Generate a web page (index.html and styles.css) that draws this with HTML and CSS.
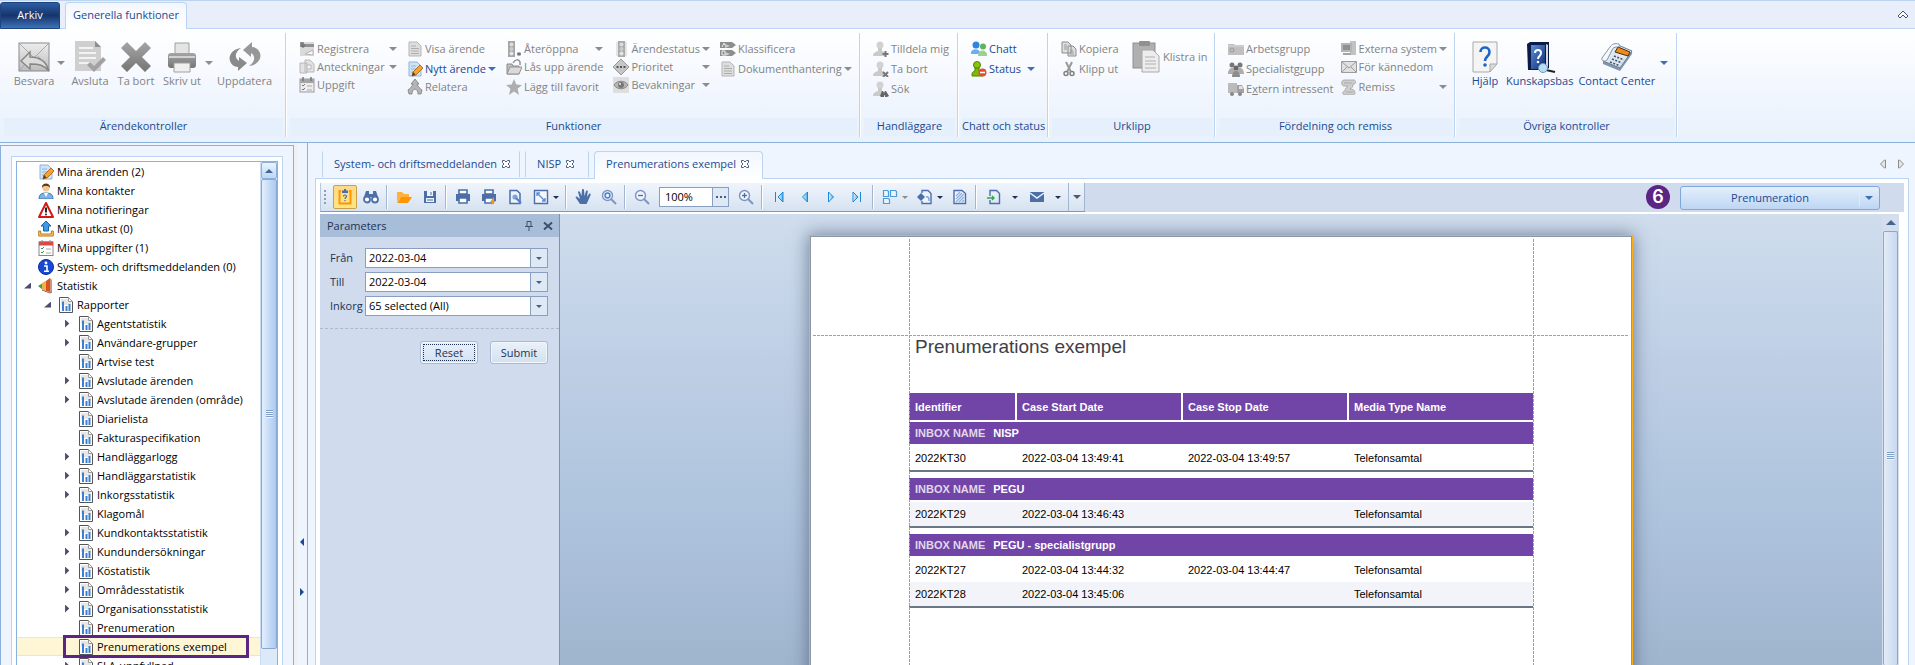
FILE: index.html
```html
<!DOCTYPE html>
<html lang="sv">
<head>
  <meta charset="UTF-8" />
  <title>Prenumerations exempel</title>
  <meta name="viewport" content="width=device-width, initial-scale=1" />
  <link rel="stylesheet" href="styles.css">
</head>
<body>
  <!-- ===========================
       Icon sprite
       =========================== -->
  <svg class="sprite" aria-hidden="true">
    <defs>
      <linearGradient id="g-grey" x1="0" y1="0" x2="0" y2="1"><stop offset="0" stop-color="#ededed"/><stop offset="1" stop-color="#bdbdbd"/></linearGradient>
      <linearGradient id="g-dark" x1="0" y1="0" x2="0" y2="1"><stop offset="0" stop-color="#a5a5a5"/><stop offset="1" stop-color="#757575"/></linearGradient>
      <linearGradient id="g-blue" x1="0" y1="0" x2="1" y2="1"><stop offset="0" stop-color="#5b8fd8"/><stop offset="1" stop-color="#0c2c74"/></linearGradient>
      <linearGradient id="g-nav" x1="0" y1="0" x2="1" y2="0"><stop offset="0" stop-color="#e8f7ff"/><stop offset="1" stop-color="#4fb3ea"/></linearGradient>

      <symbol id="i-reply" viewBox="0 0 32 32"><rect x="1" y="2" width="30" height="28" fill="url(#g-grey)" stroke="#8a8a8a"/><path d="M2 3l14 14L30 3M2 29l11-13M30 29L20 15" fill="none" stroke="#a8a8a8"/><path d="M3 20l9-9v5c9 0 16 3 19 14-5-6-10-7-19-7v5z" fill="#dcdcdc" stroke="#858585" stroke-width="1.4"/></symbol>
      <symbol id="i-finish" viewBox="0 0 32 32"><path d="M1 0h20l6 6v24H1z" fill="#cfcfcf"/><path d="M21 0v6h6z" fill="#8e8e8e"/><path d="M5 7h14M5 12h17M5 17h17M5 22h12" stroke="#f3f3f3" stroke-width="2"/><path d="M13 24l3-3 4 4 9-9 3 3-12 12z" fill="#a2a2a2"/></symbol>
      <symbol id="i-delete" viewBox="0 0 32 32"><path d="M7 1l9 9 9-9 6 6-9 9 9 9-6 6-9-9-9 9-6-6 9-9-9-9z" fill="url(#g-dark)"/></symbol>
      <symbol id="i-print" viewBox="0 0 32 32"><path d="M9 2h14v12H9z" fill="#e4e4e4" stroke="#a0a0a0"/><rect x="2" y="12" width="28" height="15" rx="3" fill="url(#g-dark)"/><path d="M3 16h26" stroke="#d2d2d2" stroke-width="2"/><path d="M8 22h16v9H8z" fill="#efefef" stroke="#a0a0a0"/></symbol>
      <symbol id="i-refresh" viewBox="0 0 32 32"><path d="M12 7C4 8-1 14 1 20c1 3 4 6 8 6v4l9-8-8-6v4c-5-3-4-9 2-13z" fill="#8a8a8a"/><path d="M20 25c8-1 13-7 11-13-1-3-4-6-8-6V1l-9 8 8 7v-4c5 3 4 9-2 13z" fill="#979797"/></symbol>
      <symbol id="i-doc" viewBox="0 0 16 16"><path d="M2 1h8l4 4v10H2z" fill="#dedede" stroke="#b5b5b5"/><path d="M4 5h5M4 7.500h8M4 10h8M4 12.500h8" stroke="#adadad"/></symbol>
      <symbol id="i-register" viewBox="0 0 16 16"><rect x="1" y="1" width="14" height="14" fill="#dadada"/><path d="M1 1h4v2h10v3H1z" fill="#909090"/><path d="M3 2v4h2V3" fill="none" stroke="#666"/><path d="M6 13l8-4v5z" fill="#f7f7f7" stroke="#b5b5b5"/></symbol>
      <symbol id="i-notes" viewBox="0 0 16 16"><path d="M1 4h7v10H1zM6 1h5l4 4v8H6z" fill="#e2e2e2" stroke="#b8b8b8"/><path d="M8 6h4v4H8z" fill="#f4f4f4" stroke="#b8b8b8"/></symbol>
      <symbol id="i-task" viewBox="0 0 16 16"><rect x="1" y="2" width="14" height="13" fill="#ededed" stroke="#9b9b9b"/><path d="M1 2h14v4H1z" fill="#a5a5a5"/><path d="M4 0v4M12 0v4" stroke="#777" stroke-width="1.500"/><path d="M3 8l1 1 2-2M3 12l1 1 2-2" fill="none" stroke="#777"/><path d="M8 9h5M8 13h5" stroke="#aaa"/></symbol>
      <symbol id="i-edit" viewBox="0 0 16 16"><path d="M2 1h8l4 4v10H2z" fill="#cfe3f6" stroke="#8fb4da"/><path d="M4 5h5M4 8h7M4 11h4" stroke="#8fb4da"/><path d="M5 15l1-4 7-7 3 3-7 7z" fill="#f5a32a" stroke="#a35d12" stroke-width=".8"/><path d="M5 15l1-4 2.500 2.500z" fill="#5a3a1a"/></symbol>
      <symbol id="i-relate" viewBox="0 0 16 16"><path d="M8 0l4 5h-2c1 3 3 4 5 6l-1 4h-3c0-3-1-4-3-5-2 1-3 2-3 5H2l-1-4c2-2 4-3 5-6H4z" fill="#b4b4b4" stroke="#7f7f7f" stroke-width=".8"/></symbol>
      <symbol id="i-light" viewBox="0 0 16 16"><path d="M5 0h7v16H5z" fill="#aaa"/><path d="M4 1v14M13 1v14" stroke="#cdcdcd"/><circle cx="8.500" cy="3.500" r="2" fill="#dcdcdc"/><circle cx="8.500" cy="8" r="2" fill="#cacaca"/><circle cx="8.500" cy="12.500" r="2" fill="#e4e4e4"/></symbol>
      <symbol id="i-reopen" viewBox="0 0 16 16"><path d="M2 0h7v16H2z" fill="#a5a5a5"/><circle cx="5.500" cy="3.500" r="2" fill="#dcdcdc"/><circle cx="5.500" cy="8" r="2" fill="#cacaca"/><circle cx="5.500" cy="12.500" r="2" fill="#e4e4e4"/><path d="M13 11v4M11 12l4 2M15 12l-4 2" stroke="#666"/></symbol>
      <symbol id="i-unlock" viewBox="0 0 16 16"><path d="M1 5h5l1 2h6v8H1z" fill="#bebebe" stroke="#8c8c8c"/><path d="M1 15l3-7h12l-3 7z" fill="#dadada" stroke="#939393"/><path d="M7 4c2-4 6-4 7-1v3" fill="none" stroke="#939393" stroke-width="1.500"/></symbol>
      <symbol id="i-star" viewBox="0 0 16 16"><path d="M8 0l2.300 5.600 5.700.4-4.400 3.700L13 16l-5-3.400L3 16l1.400-6.300L0 6l5.700-.4z" fill="#aeaeae"/></symbol>
      <symbol id="i-prio" viewBox="0 0 16 16"><path d="M8 0l8 8-8 8-8-8z" fill="#c6c6c6" stroke="#9a9a9a"/><path d="M3.500 8h9" stroke="#555" stroke-width="2" stroke-dasharray="2 1.500"/></symbol>
      <symbol id="i-eye" viewBox="0 0 16 16"><path d="M0 0h16v16H0z" fill="#dedede"/><path d="M1 8c3-5 11-5 14 0-3 5-11 5-14 0z" fill="#b5b5b5" stroke="#8a8a8a"/><circle cx="8" cy="8" r="3" fill="#777"/><circle cx="7" cy="7" r="1" fill="#eee"/></symbol>
      <symbol id="i-class" viewBox="0 0 16 16"><path d="M0 1h12l4 3-4 3H0zM0 9h12l4 3-4 3H0z" fill="#8d8d8d"/><path d="M2 6l2-4 2 4M2 14V10h3v4z" fill="none" stroke="#eee"/><path d="M5 3l5 2-5 2zM5 11l5 2-5 2z" fill="#ccc"/></symbol>
      <symbol id="i-user" viewBox="0 0 16 16"><circle cx="7" cy="4" r="3.500" fill="#d2d2d2"/><path d="M5 7h4v3c3 1 4 2 4 5H0c0-3 2-4 5-5z" fill="#cacaca"/></symbol>
      <symbol id="i-useradd" viewBox="0 0 16 16"><use href="#i-user"/><path d="M12.500 10v6M9.500 13h6" stroke="#777" stroke-width="2"/></symbol>
      <symbol id="i-userdel" viewBox="0 0 16 16"><use href="#i-user"/><path d="M10 11l5 5M15 11l-5 5" stroke="#777" stroke-width="2"/></symbol>
      <symbol id="i-userfind" viewBox="0 0 16 16"><use href="#i-user"/><path d="M7 15l2-5h1l1 2 1-2h1l3 5-2 1h-2v-2h-1v2H8z" fill="#666"/></symbol>
      <symbol id="i-chat" viewBox="0 0 16 16"><circle cx="5" cy="4" r="3.500" fill="#2f86e0"/><path d="M0 12c0-5 9-5 9 0v1H0z" fill="#69aef0"/><circle cx="12" cy="5.500" r="3" fill="#5cb45c"/><path d="M7 14c0-6 9-6 9 0v1H7z" fill="#9bd08e"/></symbol>
      <symbol id="i-status" viewBox="0 0 16 16"><circle cx="6" cy="4" r="3.500" fill="#8cc40c" stroke="#4d8500"/><path d="M4 7h4v3c3 1 4 2 4 5H1c0-3 0-4 3-5z" fill="#80b80a" stroke="#4d8500"/><circle cx="11.500" cy="11.500" r="4" fill="#e84c2c"/><path d="M9 11.500h5" stroke="#fff" stroke-width="1.500"/></symbol>
      <symbol id="i-copy" viewBox="0 0 16 16"><path d="M1 1h6l3 3v8H1zM7 5h5l3 3v7H7z" fill="#dfdfdf" stroke="#8c8c8c"/><path d="M3 4h3M3 6h3M3 8h3M9 9h3M9 11h4M9 13h4" stroke="#999"/></symbol>
      <symbol id="i-cut" viewBox="0 0 16 16"><path d="M5 1l5 10M11 1L6 11" stroke="#999" stroke-width="2"/><circle cx="5" cy="12.500" r="2" fill="none" stroke="#808080" stroke-width="1.500"/><circle cx="11" cy="12.500" r="2" fill="none" stroke="#808080" stroke-width="1.500"/></symbol>
      <symbol id="i-paste" viewBox="0 0 32 32"><rect x="2" y="2" width="22" height="25" fill="#b0b0b0" stroke="#8f8f8f"/><rect x="8" y="0" width="11" height="5" rx="1" fill="#909090"/><path d="M11 9h11l6 6v16H11z" fill="#ededed" stroke="#a8a8a8"/><path d="M14 16h10M14 20h11M14 23h11M14 27h11" stroke="#b0b0b0"/></symbol>
      <symbol id="i-folder" viewBox="0 0 16 16"><path d="M0 3h6l1 1h9v10H0z" fill="#c0c0c0"/><path d="M0 5h16" stroke="#d9d9d9"/><circle cx="4" cy="9" r="2" fill="none" stroke="#999"/></symbol>
      <symbol id="i-group" viewBox="0 0 16 16"><circle cx="4" cy="4" r="2.500" fill="#777"/><circle cx="12" cy="4" r="2.500" fill="#777"/><path d="M0 13c0-8 8-8 8 0zM8 13c0-8 8-8 8 0z" fill="#adadad"/><circle cx="8" cy="7" r="2.500" fill="#666"/><path d="M4 16c0-8 8-8 8 0z" fill="#8c8c8c"/></symbol>
      <symbol id="i-truck" viewBox="0 0 16 16"><path d="M0 2h9v10H0z" fill="#bbb"/><path d="M9 4h5l2 4v4H9z" fill="#a2a2a2"/><path d="M11 5h3l1 3h-4z" fill="#e2e2e2"/><circle cx="4" cy="13" r="2" fill="#888"/><circle cx="12" cy="13" r="2" fill="#888"/></symbol>
      <symbol id="i-system" viewBox="0 0 16 16"><path d="M9 0h6v14H9z" fill="#c2c2c2"/><rect x="0" y="2" width="11" height="9" fill="#b4b4b4"/><path d="M2 4h7v5H2z" fill="#8f8f8f"/><path d="M2 12h8v2H2z" fill="#a4a4a4"/></symbol>
      <symbol id="i-mail" viewBox="0 0 16 16"><path d="M.5 2.500h15v11H.5z" fill="#e0e0e0" stroke="#9c9c9c"/><path d="M1 3l7 6 7-6M1 13l5-5M15 13l-5-5" fill="none" stroke="#9c9c9c"/></symbol>
      <symbol id="i-remiss" viewBox="0 0 16 16"><path d="M3 1h10c2 0 2 4 0 4h-1c0 3-1 4-3 5 3 0 5 1 5 4 0 1-1 2-2 2H4c-3 0-3-4 0-4 0-3 2-4 3-5H3C0 7 0 1 3 1z" fill="#cdcdcd" stroke="#a0a0a0" stroke-width=".8"/><path d="M3 4h8M5 13h7" stroke="#aaa"/></symbol>
      <symbol id="i-help" viewBox="0 0 32 32"><path d="M4 1h24v22l-8 8H4z" fill="#f4f4f4" stroke="#a9a9a9"/><path d="M28 23h-7v8z" fill="#dcdcdc" stroke="#a9a9a9"/><path d="M11.500 11c0-6 9-6 9 0 0 5-4.500 4-4.500 9" fill="none" stroke="#1c64c8" stroke-width="2.600"/><circle cx="16" cy="24" r="1.800" fill="#1c64c8"/></symbol>
      <symbol id="i-book" viewBox="0 0 32 32"><path d="M3 3l3-2h19v26l-3 2H4z" fill="#0b1a48"/><path d="M7 4h14v24H7z" fill="url(#g-blue)"/><path d="M22 3l2 1v24l-2 1z" fill="#d8d8d8"/><path d="M11 12c0-4 6-4 6 0 0 3-3 3-3 6" fill="none" stroke="#fff" stroke-width="2"/><circle cx="14" cy="21" r="1.300" fill="#fff"/><path d="M22 29l9 2" stroke="#222" stroke-width="2"/><circle cx="19" cy="27" r="4.500" fill="#b9ddf4" stroke="#6d97b8"/></symbol>
      <symbol id="i-phone" viewBox="0 0 32 32"><path d="M12 8l5-4 14 6v3L19 30 2 23v-3z" fill="#7f94ad"/><path d="M12 7l5-3 14 6-12 17L2 20z" fill="#dfe7f0" stroke="#6b7f96"/><path d="M17 6l12 5-2 4-13-4z" fill="#f08a1c" stroke="#4a2c08"/><path d="M1 17L9 6c2-3 5-4 9-3 1 2 0 3-2 3-3 0-4 1-5 3L6 19c-2 2-6 1-5-2z" fill="#f6f9fc" stroke="#8294a8"/><path d="M13 15l10 4M11 18l10 4M9 21l10 4" stroke="#42566e" stroke-width="1.600" stroke-dasharray="2 1.500"/></symbol>

      <symbol id="i-person" viewBox="0 0 16 16"><path d="M1 16c0-5 3-6 7-6s7 1 7 6z" fill="#7fb2e5" stroke="#3f78b8"/><path d="M6 10l2 4 2-4z" fill="#fff"/><circle cx="8" cy="5" r="3.500" fill="#f2c49a"/><path d="M4 5c-1-6 9-6 8 0-1-3-7-3-8 0z" fill="#5b3714"/></symbol>
      <symbol id="i-warn" viewBox="0 0 16 16"><path d="M8 1l7 14H1z" fill="#fff" stroke="#d11a1a" stroke-width="2" stroke-linejoin="round"/><path d="M8 5.500v5" stroke="#222" stroke-width="2"/><circle cx="8" cy="12.500" r="1" fill="#222"/></symbol>
      <symbol id="i-draft" viewBox="0 0 16 16"><path d="M8 0l5 5h-2.500v5h-5V5H3z" fill="#3d9be6" stroke="#1662ac"/><path d="M.7 10v5h14.600v-5h-2v3H2.700v-3z" fill="#fbd06a" stroke="#b87a1a"/></symbol>
      <symbol id="i-todo" viewBox="0 0 16 16"><rect x="1" y="2" width="14" height="13.500" fill="#fff" stroke="#888"/><path d="M1 1.500h14v4H1z" fill="#e04545"/><path d="M4 0v3M12 0v3" stroke="#888"/><path d="M3 8l1 1 2-2M3 12l1 1 2-2" fill="none" stroke="#3a9a3a"/><path d="M8 9h5M8 13h5" stroke="#aaa"/></symbol>
      <symbol id="i-info" viewBox="0 0 16 16"><circle cx="8" cy="8" r="7.500" fill="#1748d8" stroke="#0c2a94"/><circle cx="8" cy="4" r="1.400" fill="#fff"/><path d="M6 7h3v5M6 12.300h5" fill="none" stroke="#fff" stroke-width="1.600"/></symbol>
      <symbol id="i-stat" viewBox="0 0 16 16"><path d="M0 8l5-3v7z" fill="#3f9f4a"/><path d="M4 5l4-2v10l-4-2z" fill="#f0b23c"/><path d="M8 3l4-3v14l-4-1z" fill="#d9502e"/><path d="M12 0l2 2v12l-2 1z" fill="#c79a78"/><path d="M4 12l8 3 2-1" fill="none" stroke="#8a6a54"/></symbol>
      <symbol id="i-report" viewBox="0 0 16 16"><path d="M1.500.5h9l4 4v11h-13z" fill="#fff" stroke="#555"/><path d="M3 2h7v3h3v3H3z" fill="#e6e6e6"/><path d="M10.500.5v4h4z" fill="#fff" stroke="#999"/><path d="M5 4.500V14M8.500 9v5M11.500 7v7" stroke="#3f7fd0" stroke-width="2"/></symbol>
      <symbol id="i-closetab" viewBox="0 0 10 10"><path d="M1.500 1.500h2L5 3l1.500-1.500h2v2L7 5l1.500 1.500v2h-2L5 7 3.500 8.500h-2v-2L3 5 1.500 3.500z" fill="#fff" stroke="#4a5f80"/></symbol>

      <symbol id="t-param" viewBox="0 0 16 16"><path d="M4 2H2.500v12.500h11V2H12" fill="none" stroke="#ff9500" stroke-width="2"/><path d="M5 4V1.500h2V0h2v1.500h2V4z" fill="#4d6fa8"/><path d="M6.500 7.500c0-2 3-2 3 0 0 1.200-1.500 1-1.500 2.500M8 11v1.300" fill="none" stroke="#4d6fa8" stroke-width="1.200"/></symbol>
      <symbol id="t-find" viewBox="0 0 16 16"><path d="M3 2h3v3h4V2h3l2 6H1z" fill="#4d6fa8"/><circle cx="4" cy="10.500" r="3" fill="#fff" stroke="#4d6fa8" stroke-width="1.800"/><circle cx="12" cy="10.500" r="3" fill="#fff" stroke="#4d6fa8" stroke-width="1.800"/></symbol>
      <symbol id="t-open" viewBox="0 0 16 16"><path d="M1 3h5l2 2h5v3H5l-4 5z" fill="#ffb13d"/><path d="M5 8h11l-4 6H1z" fill="#ff9500"/></symbol>
      <symbol id="t-save" viewBox="0 0 16 16"><path d="M2 2h12v12H2z" fill="#4d6fa8"/><path d="M5 2h6v5H5zM4 9h8v4H4z" fill="#edf3fb"/><path d="M9 3v3M5 11h6" stroke="#4d6fa8"/></symbol>
      <symbol id="t-print" viewBox="0 0 16 16"><path d="M4 1h8v4H4z" fill="#fff" stroke="#4d6fa8" stroke-width="1.600"/><path d="M1 5h14v7H1z" fill="#4d6fa8"/><path d="M4 9h8v5H4z" fill="#fff" stroke="#4d6fa8" stroke-width="1.600"/></symbol>
      <symbol id="t-quick" viewBox="0 0 16 16"><use href="#t-print"/><path d="M13 8l-4 5h2l-1 3 5-4h-2z" fill="#ff9500"/></symbol>
      <symbol id="t-setup" viewBox="0 0 16 16"><path d="M3 1.500h7l3 3v10H3z" fill="#edf3fb" stroke="#4d6fa8" stroke-width="1.500"/><circle cx="8" cy="8" r="2.600" fill="#7fa5dd"/><path d="M9 9l5 5" stroke="#4d7fd0" stroke-width="2"/></symbol>
      <symbol id="t-scale" viewBox="0 0 16 16"><path d="M1.500 1.500h13v13h-13z" fill="#f4f8fd" stroke="#4d6fa8" stroke-width="1.400"/><path d="M4 7V4h3M4 4l8 8M12 9v3H9" fill="none" stroke="#5a8ed8" stroke-width="1.400"/></symbol>
      <symbol id="t-hand" viewBox="0 0 16 16"><path d="M5 15L1 9c-1-1 0-2 1.500-1L5 10 3 3c0-1 1.500-1.300 2 0l1.500 4L7 1c0-1.300 2-1.300 2 0l.5 6L11 2c.5-1 2-.6 1.800.5L12 8l2-3c1-1 2-.3 1.700.8L13 12l-1.500 3z" fill="#4d6fa8"/></symbol>
      <symbol id="t-mag" viewBox="0 0 16 16"><circle cx="6.500" cy="6.500" r="5" fill="#edf3fb" stroke="#7f95bd" stroke-width="1.400"/><circle cx="6.500" cy="6.500" r="2.400" fill="none" stroke="#4d7fd0" stroke-width="1.500"/><path d="M10 10l5 5" stroke="#7f95bd" stroke-width="2"/></symbol>
      <symbol id="t-out" viewBox="0 0 16 16"><circle cx="6.500" cy="6.500" r="5" fill="#edf3fb" stroke="#7f95bd" stroke-width="1.400"/><path d="M4 6.500h5" stroke="#4d6fa8" stroke-width="1.300"/><path d="M10 10l5 5" stroke="#7f95bd" stroke-width="2"/></symbol>
      <symbol id="t-in" viewBox="0 0 16 16"><use href="#t-out"/><path d="M6.500 4v5" stroke="#4d6fa8" stroke-width="1.300"/></symbol>
      <symbol id="t-next" viewBox="0 0 16 16"><path d="M5.500 3v10l5-5z" fill="url(#g-nav)" stroke="#1f86d4"/></symbol>
      <symbol id="t-prev" viewBox="0 0 16 16"><path d="M10.500 3v10l-5-5z" fill="url(#g-nav)" stroke="#1f86d4"/></symbol>
      <symbol id="t-first" viewBox="0 0 16 16"><path d="M12 3v10L7 8z" fill="url(#g-nav)" stroke="#1f86d4"/><path d="M4.500 3v10" stroke="#1f86d4"/></symbol>
      <symbol id="t-last" viewBox="0 0 16 16"><path d="M4 3v10l5-5z" fill="url(#g-nav)" stroke="#1f86d4"/><path d="M11.500 3v10" stroke="#1f86d4"/></symbol>
      <symbol id="t-pages" viewBox="0 0 16 16"><path d="M1.500 1.500h4l1 1v5h-5zM8.500 1.500h5l1 1v5h-6zM1.500 9.500h5l1 1v4h-6z" fill="#edf6fe" stroke="#4b9be0" stroke-width="1.200"/></symbol>
      <symbol id="t-color" viewBox="0 0 16 16"><path d="M5 4V1.500h6l3 3v10H5V12" fill="#edf3fb" stroke="#4d6fa8" stroke-width="1.400"/><path d="M0 8l4-4 4 4-4 4z" fill="#4d6fa8"/><path d="M9 8c3-1 3 2 3 4" fill="none" stroke="#7fa5dd" stroke-width="1.500"/></symbol>
      <symbol id="t-water" viewBox="0 0 16 16"><path d="M2 1.500h8l3.500 3v10H2z" fill="#edf3fb" stroke="#4d6fa8" stroke-width="1.400"/><path d="M4 7l4-4M4 10l6-6M4 13l8-8M7 13l5-5M10 13l2-2" stroke="#8fb0e4" stroke-width="1.300"/></symbol>
      <symbol id="t-export" viewBox="0 0 16 16"><path d="M4 7V1.500h6.500l3 3v10H4V11" fill="none" stroke="#4d6fa8" stroke-width="1.400"/><path d="M1 9h7M6 7l2 2-2 2" fill="none" stroke="#35a845" stroke-width="1.400"/></symbol>
      <symbol id="t-mail" viewBox="0 0 16 16"><path d="M1 3h14v10H1z" fill="#4d6fa8"/><path d="M1 4l7 5 7-5" fill="none" stroke="#edf3fb" stroke-width="1.500"/></symbol>
      <symbol id="t-pin" viewBox="0 0 10 12"><path d="M3 1.500h4v5H3zM1 6.500h8M5 7v4" fill="none" stroke="#3b4f70"/></symbol>
      <symbol id="t-x" viewBox="0 0 10 10"><path d="M1 1.500l8 7M9 1.500l-8 7" stroke="#3b4f70" stroke-width="2"/></symbol>
    </defs>
  </svg>

  <!-- ===========================
       Ribbon
       =========================== -->
  <header class="ribbon">
    <div class="ribbon-tabs">
      <button class="file-tab">Arkiv</button>
      <button class="ribbon-tab">Generella funktioner</button>
      <button class="collapse-btn" aria-label="Minimera"><svg width="12" height="10" viewBox="0 0 12 10"><path d="M1 7l5-5 5 5-2 2-3-3-3 3z" fill="#fff" stroke="#3c5680"/></svg></button>
    </div>

    <div class="ribbon-body">
      <section class="group g-control">
        <div class="group-items big-row">
          <button class="big off"><svg><use href="#i-reply"/></svg>Besvara</button><i class="arrow off"></i>
          <button class="big off"><svg><use href="#i-finish"/></svg>Avsluta</button>
          <button class="big off"><svg><use href="#i-delete"/></svg>Ta bort</button>
          <button class="big off"><svg><use href="#i-print"/></svg>Skriv ut</button><i class="arrow off"></i>
          <button class="big off"><svg><use href="#i-refresh"/></svg>Uppdatera</button>
        </div>
        <h2>Ärendekontroller</h2>
      </section>

      <section class="group g-func">
        <div class="group-items">
          <div class="col">
            <button class="small drop off"><svg><use href="#i-register"/></svg>Registrera<i class="arrow"></i></button>
            <button class="small drop off"><svg><use href="#i-notes"/></svg>Anteckningar<i class="arrow"></i></button>
            <button class="small off"><svg><use href="#i-task"/></svg>Uppgift</button>
          </div>
          <div class="col">
            <button class="small off"><svg><use href="#i-doc"/></svg>Visa ärende</button>
            <button class="small drop"><svg><use href="#i-edit"/></svg>Nytt ärende<i class="arrow"></i></button>
            <button class="small off"><svg><use href="#i-relate"/></svg>Relatera</button>
          </div>
          <div class="col">
            <button class="small drop off"><svg><use href="#i-reopen"/></svg>Återöppna<i class="arrow"></i></button>
            <button class="small off"><svg><use href="#i-unlock"/></svg>Lås upp ärende</button>
            <button class="small off"><svg><use href="#i-star"/></svg>Lägg till favorit</button>
          </div>
          <div class="col">
            <button class="small drop off"><svg><use href="#i-light"/></svg>Ärendestatus<i class="arrow"></i></button>
            <button class="small drop off"><svg><use href="#i-prio"/></svg>Prioritet<i class="arrow"></i></button>
            <button class="small drop off"><svg><use href="#i-eye"/></svg>Bevakningar<i class="arrow"></i></button>
          </div>
          <div class="col">
            <button class="small off"><svg><use href="#i-class"/></svg>Klassificera</button>
            <button class="small drop off"><svg><use href="#i-doc"/></svg>Dokumenthantering<i class="arrow"></i></button>
          </div>
        </div>
        <h2>Funktioner</h2>
      </section>

      <section class="group g-handler">
        <div class="group-items">
          <div class="col">
            <button class="small off"><svg><use href="#i-useradd"/></svg>Tilldela mig</button>
            <button class="small off"><svg><use href="#i-userdel"/></svg>Ta bort</button>
            <button class="small off"><svg><use href="#i-userfind"/></svg>Sök</button>
          </div>
        </div>
        <h2>Handläggare</h2>
      </section>

      <section class="group g-chat">
        <div class="group-items">
          <div class="col">
            <button class="small"><svg><use href="#i-chat"/></svg>Chatt</button>
            <button class="small drop"><svg><use href="#i-status"/></svg>Status<i class="arrow"></i></button>
          </div>
        </div>
        <h2>Chatt och status</h2>
      </section>

      <section class="group g-clip">
        <div class="group-items">
          <div class="col">
            <button class="small off"><svg><use href="#i-copy"/></svg>Kopiera</button>
            <button class="small off"><svg><use href="#i-cut"/></svg>Klipp ut</button>
          </div>
          <button class="paste off"><svg><use href="#i-paste"/></svg>Klistra in</button>
        </div>
        <h2>Urklipp</h2>
      </section>

      <section class="group g-dist">
        <div class="group-items">
          <div class="col">
            <button class="small off"><svg><use href="#i-folder"/></svg><span>Arbets<u>g</u>rupp</span></button>
            <button class="small off"><svg><use href="#i-group"/></svg><span>Specialistg<u>r</u>upp</span></button>
            <button class="small off"><svg><use href="#i-truck"/></svg><span>E<u>x</u>tern intressent</span></button>
          </div>
          <div class="col">
            <button class="small drop off"><svg><use href="#i-system"/></svg>Externa system<i class="arrow"></i></button>
            <button class="small off"><svg><use href="#i-mail"/></svg>För kännedom</button>
            <button class="small drop off"><svg><use href="#i-remiss"/></svg>Remiss<i class="arrow"></i></button>
          </div>
        </div>
        <h2>Fördelning och remiss</h2>
      </section>

      <section class="group g-other">
        <div class="group-items big-row">
          <button class="big"><svg><use href="#i-help"/></svg>Hjälp</button>
          <button class="big"><svg><use href="#i-book"/></svg>Kunskapsbas</button>
          <button class="big"><svg><use href="#i-phone"/></svg>Contact Center</button><i class="arrow"></i>
        </div>
        <h2>Övriga kontroller</h2>
      </section>
    </div>
  </header>

  <div class="workspace">
    <!-- ===========================
         Navigation tree
         =========================== -->
    <aside class="nav-panel">
      <div class="nav-frame">
        <div class="tree-box">
          <ul class="tree">
            <li><a href="#"><svg><use href="#i-edit"/></svg>Mina ärenden (2)</a></li>
            <li><a href="#"><svg><use href="#i-person"/></svg>Mina kontakter</a></li>
            <li><a href="#"><svg><use href="#i-warn"/></svg>Mina notifieringar</a></li>
            <li><a href="#"><svg><use href="#i-draft"/></svg>Mina utkast (0)</a></li>
            <li><a href="#"><svg><use href="#i-todo"/></svg>Mina uppgifter (1)</a></li>
            <li><a href="#"><svg><use href="#i-info"/></svg>System- och driftsmeddelanden (0)</a></li>
            <li><a href="#" class="open"><svg><use href="#i-stat"/></svg>Statistik</a>
              <ul class="level-2">
                <li><a href="#" class="open"><svg><use href="#i-report"/></svg>Rapporter</a>
                  <ul class="level-3">
                    <li><a href="#" class="closed"><svg><use href="#i-report"/></svg>Agentstatistik</a></li>
                    <li><a href="#" class="closed"><svg><use href="#i-report"/></svg>Användare-grupper</a></li>
                    <li><a href="#"><svg><use href="#i-report"/></svg>Artvise test</a></li>
                    <li><a href="#" class="closed"><svg><use href="#i-report"/></svg>Avslutade ärenden</a></li>
                    <li><a href="#" class="closed"><svg><use href="#i-report"/></svg>Avslutade ärenden (område)</a></li>
                    <li><a href="#"><svg><use href="#i-report"/></svg>Diarielista</a></li>
                    <li><a href="#"><svg><use href="#i-report"/></svg>Fakturaspecifikation</a></li>
                    <li><a href="#" class="closed"><svg><use href="#i-report"/></svg>Handläggarlogg</a></li>
                    <li><a href="#" class="closed"><svg><use href="#i-report"/></svg>Handläggarstatistik</a></li>
                    <li><a href="#" class="closed"><svg><use href="#i-report"/></svg>Inkorgsstatistik</a></li>
                    <li><a href="#"><svg><use href="#i-report"/></svg>Klagomål</a></li>
                    <li><a href="#" class="closed"><svg><use href="#i-report"/></svg>Kundkontaktsstatistik</a></li>
                    <li><a href="#" class="closed"><svg><use href="#i-report"/></svg>Kundundersökningar</a></li>
                    <li><a href="#" class="closed"><svg><use href="#i-report"/></svg>Köstatistik</a></li>
                    <li><a href="#" class="closed"><svg><use href="#i-report"/></svg>Områdesstatistik</a></li>
                    <li><a href="#" class="closed"><svg><use href="#i-report"/></svg>Organisationsstatistik</a></li>
                    <li><a href="#"><svg><use href="#i-report"/></svg>Prenumeration</a></li>
                    <li class="selected"><a href="#"><svg><use href="#i-report"/></svg>Prenumerations exempel</a></li>
                    <li><a href="#" class="closed"><svg><use href="#i-report"/></svg>SLA-uppfyllnad</a></li>
                  </ul>
                </li>
              </ul>
            </li>
          </ul>
          <div class="nav-scroll">
            <div class="scroll-up"><i class="tri-up"></i></div>
            <div class="thumb"><i class="grip"></i></div>
          </div>
        </div>
      </div>
    </aside>

    <div class="splitter"><i class="to-left"></i><i class="to-right"></i></div>

    <!-- ===========================
         Document area
         =========================== -->
    <main class="documents">
      <nav class="doc-tabs">
        <button class="doc-tab">System- och driftsmeddelanden <svg><use href="#i-closetab"/></svg></button>
        <button class="doc-tab">NISP <svg><use href="#i-closetab"/></svg></button>
        <button class="doc-tab active">Prenumerations exempel <svg><use href="#i-closetab"/></svg></button>
        <div class="tab-nav">
          <svg width="8" height="10" viewBox="0 0 8 10"><path d="M6.500 1v8h-1l-4-4 4-4z" fill="#e6e6e6" stroke="#8c8c8c"/></svg>
          <svg width="8" height="10" viewBox="0 0 8 10"><path d="M1.500 1v8h1l4-4-4-4z" fill="#e6e6e6" stroke="#8c8c8c"/></svg>
        </div>
      </nav>

      <div class="doc-body">
        <div class="tool-row">
          <div class="toolbar">
            <i class="handle"></i>
            <button class="tool pressed" aria-label="Parameters"><svg><use href="#t-param"/></svg></button>
            <button class="tool" aria-label="Find"><svg><use href="#t-find"/></svg></button>
            <i class="sep"></i>
            <button class="tool" aria-label="Open"><svg><use href="#t-open"/></svg></button>
            <button class="tool" aria-label="Save"><svg><use href="#t-save"/></svg></button>
            <i class="sep"></i>
            <button class="tool" aria-label="Print"><svg><use href="#t-print"/></svg></button>
            <button class="tool" aria-label="Quick print"><svg><use href="#t-quick"/></svg></button>
            <button class="tool" aria-label="Page setup"><svg><use href="#t-setup"/></svg></button>
            <button class="tool wide" aria-label="Scale"><svg><use href="#t-scale"/></svg><i class="arrow"></i></button>
            <i class="sep"></i>
            <button class="tool" aria-label="Hand"><svg><use href="#t-hand"/></svg></button>
            <button class="tool" aria-label="Magnifier"><svg><use href="#t-mag"/></svg></button>
            <i class="sep"></i>
            <button class="tool" aria-label="Zoom out"><svg><use href="#t-out"/></svg></button>
            <div class="zoom-box"><input type="text" value="100%" aria-label="Zoom"><button aria-label="Zoom levels"><i></i><i></i><i></i></button></div>
            <button class="tool" aria-label="Zoom in"><svg><use href="#t-in"/></svg></button>
            <i class="sep"></i>
            <button class="tool" aria-label="First page"><svg><use href="#t-first"/></svg></button>
            <button class="tool" aria-label="Previous page"><svg><use href="#t-prev"/></svg></button>
            <button class="tool" aria-label="Next page"><svg><use href="#t-next"/></svg></button>
            <button class="tool" aria-label="Last page"><svg><use href="#t-last"/></svg></button>
            <i class="sep"></i>
            <button class="tool wide off" aria-label="Multiple pages"><svg><use href="#t-pages"/></svg><i class="arrow"></i></button>
            <button class="tool wide" aria-label="Color"><svg><use href="#t-color"/></svg><i class="arrow"></i></button>
            <button class="tool" aria-label="Watermark"><svg><use href="#t-water"/></svg></button>
            <i class="sep"></i>
            <button class="tool split" aria-label="Export"><svg><use href="#t-export"/></svg><i class="arrow"></i></button>
            <button class="tool split" aria-label="Send"><svg><use href="#t-mail"/></svg><i class="arrow"></i></button>
            <button class="more" aria-label="More"><i class="arrow"></i></button>
          </div>
          <div class="subscribe">
            <span class="badge">6</span>
            <button class="subscribe-btn"><span>Prenumeration</span><i class="arrow"></i></button>
          </div>
        </div>

        <div class="preview">
          <form class="params" onsubmit="return false">
            <div class="params-head">Parameters
              <svg class="pin"><use href="#t-pin"/></svg>
              <svg class="close"><use href="#t-x"/></svg>
            </div>
            <div class="fields">
              <label for="from">Från</label>
              <div class="combo"><input id="from" type="text" value="2022-03-04"><button type="button" aria-label="Välj datum"><i class="arrow"></i></button></div>
              <label for="to">Till</label>
              <div class="combo"><input id="to" type="text" value="2022-03-04"><button type="button" aria-label="Välj datum"><i class="arrow"></i></button></div>
              <label for="inbox">Inkorg</label>
              <div class="combo"><select id="inbox"><option>65 selected (All)</option></select><span class="combo-arrow"><i class="arrow"></i></span></div>
            </div>
            <div class="actions">
              <button type="reset" class="focused">Reset</button>
              <button type="submit">Submit</button>
            </div>
          </form>

          <div class="viewer">
            <article class="page">
              <h1>Prenumerations exempel</h1>
              <table class="report">
                <colgroup><col class="c-id"><col class="c-start"><col class="c-stop"><col></colgroup>
                <thead>
                  <tr><th>Identifier</th><th>Case Start Date</th><th>Case Stop Date</th><th>Media Type Name</th></tr>
                </thead>
                <tbody>
                  <tr class="inbox"><th colspan="4"><span>INBOX NAME</span>NISP</th></tr>
                  <tr><td>2022KT30</td><td>2022-03-04 13:49:41</td><td>2022-03-04 13:49:57</td><td>Telefonsamtal</td></tr>
                </tbody>
                <tbody>
                  <tr class="inbox"><th colspan="4"><span>INBOX NAME</span>PEGU</th></tr>
                  <tr class="alt"><td>2022KT29</td><td>2022-03-04 13:46:43</td><td></td><td>Telefonsamtal</td></tr>
                </tbody>
                <tbody>
                  <tr class="inbox"><th colspan="4"><span>INBOX NAME</span>PEGU - specialistgrupp</th></tr>
                  <tr><td>2022KT27</td><td>2022-03-04 13:44:32</td><td>2022-03-04 13:44:47</td><td>Telefonsamtal</td></tr>
                  <tr class="alt"><td>2022KT28</td><td>2022-03-04 13:45:06</td><td></td><td>Telefonsamtal</td></tr>
                </tbody>
              </table>
              <i class="guide left"></i><i class="guide right"></i><i class="guide top"></i>
            </article>
          </div>

          <div class="view-scroll">
            <div class="scroll-up"><i class="tri-up"></i></div>
            <div class="thumb"><i class="grip"></i></div>
          </div>
        </div>
      </div>
    </main>
  </div>
</body>
</html>
```

FILE: styles.css
```css
/* -----------------------------------------------
   1. Reset and base
   ----------------------------------------------- */
* {
  margin: 0;
  padding: 0;
  box-sizing: border-box;
}

body {
  height: 100vh;
  display: flex;
  flex-direction: column;
  overflow: hidden;
  background: #eff5fe;
  font-family: "Open Sans", "Noto Sans", sans-serif;
  font-size: 11px;
  line-height: 16px;
  color: #000;
}

button,
input,
select {
  font: inherit;
  color: inherit;
  background: none;
  border: none;
  outline: none;
}

button {
  white-space: nowrap;
  cursor: pointer;
}

svg {
  flex: none;
  width: 16px;
  height: 16px;
}

.sprite {
  position: absolute;
  width: 0;
  height: 0;
}

/* small drop-down triangle */
.arrow {
  flex: none;
  width: 0;
  height: 0;
  border: 4px solid transparent;
  border-top-color: #3f6fb5;
  border-bottom: none;
}
.off .arrow,
.arrow.off {
  border-top-color: #8c8c8c;
}

/* -----------------------------------------------
   2. Ribbon tabs
   ----------------------------------------------- */
.ribbon {
  flex: none;
  border-bottom: 1px solid #8ab0dc;
}

.ribbon-tabs {
  display: flex;
  align-items: flex-end;
  height: 29px;
  background: #e8eefa;
  border-top: 1px solid #bcd4f2;
  box-shadow: inset 0 -1px #bcd4f2;
}

.file-tab {
  width: 60px;
  height: 27px;
  margin-right: 5px;
  padding-bottom: 2px;
  border: 1px solid #1d4380;
  border-radius: 3px 3px 0 0;
  background: linear-gradient(#2b5ea2, #17346c 50%, #3c72b8);
  color: #fff;
}

.ribbon-tab {
  width: 122px;
  height: 27px;
  padding-bottom: 2px;
  border: 1px solid #bcd4f2;
  border-bottom: none;
  border-radius: 4px 4px 0 0;
  background: linear-gradient(#f3f7fe, #fff);
  color: #1b4a91;
}

.collapse-btn {
  display: flex;
  align-items: center;
  height: 27px;
  margin-left: auto;
  margin-right: 6px;
  padding-bottom: 4px;
}
.collapse-btn svg {
  width: 12px;
  height: 10px;
}

/* -----------------------------------------------
   3. Ribbon groups
   ----------------------------------------------- */
.ribbon-body {
  display: flex;
  height: 113px;
  padding: 4px 0 5px;
  background: linear-gradient(#fff, #f1f6fe 60%, #e8f1fc);
}

.group {
  flex: none;
  display: flex;
  flex-direction: column;
  border-right: 1px solid #bcd4f2;
  box-shadow: 1px 0 #fff;
}
.group h2 {
  margin: auto 2px 1px 4px;
  height: 18px;
  font-size: 11px;
  font-weight: 400;
  text-align: center;
  white-space: nowrap;
  color: #1b4a91;
  background: #e6f0fc;
}

.g-control { width: 286px; }
.g-func    { width: 574px; }
.g-handler { width: 98px; }
.g-chat    { width: 90px; }
.g-clip    { width: 167px; }
.g-dist    { width: 240px; }
.g-other   { width: 222px; }

.group-items {
  display: flex;
  gap: 10px;
  padding: 7px 0 0 13px;
}
.g-dist .group-items {
  gap: 7px;
}
.big-row {
  gap: 4px;
}
.g-other .big-row {
  gap: 5px;
  padding-left: 14px;
}

.big {
  flex: none;
  display: flex;
  flex-direction: column;
  align-items: center;
  min-width: 42px;
  padding-top: 1px;
  color: #1b4a91;
}
.g-other .big {
  min-width: 32px;
}
.big svg {
  width: 32px;
  height: 32px;
}
.big + .arrow {
  margin: 21px 0 0 -2px;
}
.g-other .big + .arrow {
  margin-left: 0;
}

.col {
  min-width: 82px;
}
.g-func .col {
  min-width: 89px;
}
.g-func .col:first-child {
  min-width: 98px;
}
.g-func .col:nth-child(n+3) {
  min-width: 96px;
}
.g-func .col:last-child {
  min-width: 132px;
}
.g-chat .col {
  min-width: 62px;
}
.g-clip .col {
  min-width: 60px;
}
.g-dist .col {
  min-width: 100px;
}
.g-dist .col:last-child {
  min-width: 106px;
}

.small {
  display: flex;
  align-items: center;
  gap: 2px;
  width: 100%;
  height: 18px;
  margin-bottom: 2px;
  color: #1b4a91;
}
.small.drop {
  margin-bottom: 0;
}
.small .arrow {
  margin-left: auto;
}
.g-chat .small .arrow {
  margin-left: 4px;
}

.paste {
  display: flex;
  align-items: center;
  height: 34px;
}
.paste svg {
  width: 32px;
  height: 32px;
}

.small.off,
.big.off,
.paste.off {
  color: #838383;
}

/* -----------------------------------------------
   4. Navigation tree
   ----------------------------------------------- */
.workspace {
  flex: 1;
  display: flex;
  min-height: 0;
}

.nav-panel {
  flex: none;
  width: 294px;
  margin-top: 2px;
  padding: 10px 10px 0;
  border: 1px solid #8ab0dc;
  border-bottom: none;
}

.nav-frame {
  height: 100%;
  padding: 4px 4px 0;
  border: 1px solid #bcd4f2;
  border-bottom: none;
  background: #fff;
}

.tree-box {
  display: flex;
  height: 100%;
  border: 1px solid #8ab0dc;
  border-bottom: none;
  overflow: hidden;
}

.tree {
  flex: 1;
}
.tree,
.tree ul {
  list-style: none;
}
.tree a {
  display: flex;
  align-items: center;
  gap: 3px;
  height: 19px;
  padding-left: 7px;
  color: #000;
  text-decoration: none;
  white-space: nowrap;
}
.tree .level-2 a {
  padding-left: 27px;
}
.tree .level-3 a {
  padding-left: 47px;
}

/* expander triangles */
.tree a::before {
  content: "";
  width: 7px;
  height: 8px;
  margin-right: 4px;
}
.tree a.open::before {
  height: 6px;
  background: #4d4d6e;
  clip-path: polygon(100% 0, 100% 100%, 0 100%);
}
.tree a.closed::before {
  background: #4d4d6e;
  clip-path: polygon(15% 0, 75% 50%, 15% 100%);
}

.selected {
  position: relative;
  background: #fff6d5;
  box-shadow: inset 0 1px #fce6a4, inset 0 -1px #fce6a4;
}
.selected::after {
  content: "";
  position: absolute;
  left: 46px;
  right: 11px;
  top: -2px;
  bottom: -2px;
  border: 3px solid #5c2483;
}

/* -----------------------------------------------
   5. Scrollbars
   ----------------------------------------------- */
.nav-scroll,
.view-scroll {
  flex: none;
  width: 17px;
  display: flex;
  flex-direction: column;
}
.nav-scroll {
  background: #dce9f9;
  border-left: 1px solid #c9dcf3;
}
.view-scroll {
  background: #d3dfef;
}
.scroll-up {
  display: flex;
  align-items: center;
  justify-content: center;
  height: 17px;
}
.nav-scroll .scroll-up {
  border: 1px solid #8ab0dc;
  border-radius: 2px;
  background: linear-gradient(#eaf3fe, #bcd7f8);
}
.tri-up {
  border: 4px solid transparent;
  border-top: none;
  border-bottom-color: #47648f;
}
.view-scroll .tri-up {
  border-width: 5px;
  border-top: none;
}
.thumb {
  display: flex;
  justify-content: center;
  border: 1px solid #8ba9d0;
  border-radius: 2px;
}
.nav-scroll .thumb {
  align-items: center;
  height: calc(100% - 33px);
  background: linear-gradient(90deg, #e4effd, #a9c9f2);
}
.view-scroll .thumb {
  flex: 1;
  margin: 0 1px;
  padding-top: 220px;
  border-bottom: none;
  background: linear-gradient(90deg, #e3ecf7, #c8d8ec);
}
.grip {
  width: 7px;
  height: 8px;
  background: repeating-linear-gradient(#7f9fc9 0 1px, #eef4fc 1px 2px);
}

/* -----------------------------------------------
   6. Splitter
   ----------------------------------------------- */
.splitter {
  flex: none;
  display: flex;
  flex-direction: column;
  align-items: center;
  justify-content: flex-end;
  gap: 42px;
  width: 13px;
  padding-bottom: 69px;
  border-left: 3px solid #f0f1f3;
}
.splitter i {
  border: 4px solid transparent;
}
.splitter .to-left {
  border-left: none;
  border-right-color: #1b4a91;
}
.splitter .to-right {
  border-right: none;
  border-left-color: #1b4a91;
}

/* -----------------------------------------------
   7. Document tabs
   ----------------------------------------------- */
.documents {
  flex: 1;
  display: flex;
  flex-direction: column;
  min-width: 0;
  padding: 8px 6px 0 7px;
  border-left: 1px solid #8ab0dc;
}

.doc-tabs {
  display: flex;
  gap: 5px;
  height: 28px;
  padding-left: 7px;
}
.doc-tab {
  display: flex;
  align-items: center;
  gap: 4px;
  min-width: 64px;
  height: 26px;
  padding: 0 8px 2px 11px;
  border: 1px solid #bcd4f2;
  border-top-color: transparent;
  border-bottom: none;
  color: #1b4a91;
}
.doc-tab svg {
  width: 10px;
  height: 10px;
}
.doc-tab.active {
  height: 28px;
  padding: 0 12px 4px 11px;
  border-color: #bcd4f2;
  border-radius: 4px 4px 0 0;
  background: linear-gradient(#f1f6fe, #fff);
  position: relative;
  z-index: 1;
}
.tab-nav {
  display: flex;
  align-items: center;
  gap: 10px;
  margin: 0 4px 3px auto;
}
.tab-nav svg {
  width: 8px;
  height: 10px;
}

.doc-body {
  flex: 1;
  display: flex;
  flex-direction: column;
  gap: 2px;
  min-height: 0;
  margin-top: -1px;
  padding: 4px 4px 0;
  border: 1px solid #bcd4f2;
  border-bottom: none;
  background: #fff;
}

/* -----------------------------------------------
   8. Report toolbar
   ----------------------------------------------- */
.tool-row {
  flex: none;
  display: flex;
  justify-content: space-between;
  height: 29px;
  background: #d0dced;
}

.toolbar {
  display: flex;
  align-items: center;
  background: linear-gradient(#f0f5fc, #d6e2f1);
  border-bottom: 1px solid #8198bc;
  border-left: 1px solid #b5c6dd;
}
.handle {
  width: 2px;
  height: 15px;
  margin: 0 7px 0 3px;
  background: repeating-linear-gradient(#8a9fc0 0 2px, transparent 2px 4px);
}

.tool {
  flex: none;
  display: flex;
  align-items: center;
  justify-content: center;
  width: 26px;
  height: 24px;
}
.tool .arrow {
  border-width: 3px;
  border-bottom: none;
  border-top-color: #1d3254;
}
.tool.off .arrow {
  border-top-color: #8c8c8c;
}
.tool.pressed {
  width: 24px;
  margin-right: 1px;
  border: 1px solid #c8a24a;
  border-radius: 2px;
  background: linear-gradient(#fdd98c, #ffe680);
}
.tool.wide {
  width: 35px;
  gap: 4px;
}
.tool.split {
  width: 43px;
  gap: 10px;
}
.sep {
  width: 2px;
  height: 24px;
  margin: 0 3px 0 2px;
  border-left: 1px solid #a3b6d0;
  border-right: 1px solid #fff;
}
.more {
  display: flex;
  align-items: center;
  justify-content: center;
  width: 17px;
  height: 28px;
  margin-left: 2px;
  border: 1px solid #a3b6d0;
  border-width: 0 1px;
}
.more .arrow {
  border-top-color: #4f5b6e;
}

.zoom-box {
  display: flex;
  width: 70px;
  height: 20px;
  margin: 0 4px;
  border: 1px solid #8a9fc0;
  background: #fff;
}
.zoom-box input {
  width: 52px;
  padding-left: 5px;
}
.zoom-box button {
  flex: 1;
  display: flex;
  align-items: center;
  justify-content: center;
  gap: 2px;
  border-left: 1px solid #8a9fc0;
  background: #dfe9f5;
}
.zoom-box button i {
  width: 2px;
  height: 2px;
  background: #4a5f80;
}

.subscribe {
  display: flex;
  align-items: center;
  gap: 10px;
  padding-right: 24px;
}
.badge {
  width: 24px;
  height: 24px;
  margin-bottom: 2px;
  border-radius: 50%;
  background: #5c2483;
  color: #fff;
  font-family: Inter, sans-serif;
  font-size: 18px;
  font-weight: 600;
  line-height: 24px;
  text-align: center;
}
.subscribe-btn {
  display: flex;
  align-items: center;
  width: 200px;
  height: 24px;
  padding-right: 6px;
  border: 1px solid #7fa7d9;
  border-radius: 3px;
  background: linear-gradient(#e4effc, #bdd6f4);
  color: #1b4a91;
}
.subscribe-btn span {
  flex: 1;
  margin-right: 5px;
  border-right: 1px solid #dfebfa;
}

/* -----------------------------------------------
   9. Parameters panel
   ----------------------------------------------- */
.preview {
  flex: 1;
  display: flex;
  min-height: 0;
  margin-right: 5px;
}

.params {
  flex: none;
  width: 240px;
  border-right: 1px solid #7e92ae;
  background: #d0dced;
  color: #1d3254;
}
.params-head {
  display: flex;
  align-items: center;
  gap: 9px;
  height: 23px;
  padding: 0 6px 0 7px;
  background: #a8bdd8;
}
.params-head .pin {
  width: 10px;
  height: 12px;
  margin-left: auto;
}
.params-head .close {
  width: 10px;
  height: 10px;
}

.fields {
  display: grid;
  grid-template-columns: 35px 1fr;
  gap: 4px 0;
  padding: 11px 11px 12px 10px;
  border-bottom: 1px dashed #a9bad2;
}
.fields label {
  line-height: 20px;
}
.combo {
  display: flex;
  height: 20px;
  border: 1px solid #8a9fc0;
  background: #fff;
  color: #000;
}
.combo input,
.combo select {
  flex: 1;
  min-width: 0;
  padding-left: 3px;
  appearance: none;
}
.combo button,
.combo-arrow {
  display: flex;
  align-items: center;
  justify-content: center;
  width: 17px;
  border-left: 1px solid #8a9fc0;
  background: #dfe9f5;
}
.combo .arrow {
  border-width: 3px;
  border-bottom: none;
  border-top-color: #4a5f80;
}

.actions {
  display: flex;
  justify-content: flex-end;
  gap: 12px;
  padding: 12px 11px;
}
.actions button {
  width: 58px;
  height: 23px;
  border: 1px solid #a9b9d3;
  border-radius: 3px;
  background: linear-gradient(#eaf1fa, #d2e1f0);
  box-shadow: inset 0 0 0 1px #f3f7fc;
}
.actions .focused {
  outline: 1px dotted #1d3254;
  outline-offset: -4px;
}

/* -----------------------------------------------
   10. Report page
   ----------------------------------------------- */
.viewer {
  flex: 1;
  display: flex;
  justify-content: center;
  padding-top: 21px;
  overflow: hidden;
  background: linear-gradient(#cfdded, #bccde4 37%, #b0c6de 60%, #a9bdd8 80%, #9fb5cd);
}

.page {
  position: relative;
  flex: none;
  width: 824px;
  height: 1000px;
  padding: 100px 99px 0;
  border: 1px solid #fbaf15;
  background: #fff;
  box-shadow: inset 0 0 0 1px #8c98a6, 0 0 16px 1px rgba(60, 75, 100, 0.6);
  font-family: "Liberation Sans", Arial, sans-serif;
}
.page h1 {
  height: 57px;
  padding-left: 6px;
  font-size: 19px;
  font-weight: 400;
  line-height: 22px;
  color: #404048;
}

.report {
  width: 100%;
  table-layout: fixed;
  border-collapse: separate;
  border-spacing: 0;
}
.c-id { width: 108px; }
.c-start,
.c-stop { width: 166px; }

.report th,
.report td {
  height: 24px;
  padding: 0 5px;
  text-align: left;
}
.report th:first-child,
.report td:first-child {
  padding-left: 6px;
}
.report th {
  background: #7145a7;
  color: #fff;
}
.report thead th {
  height: 29px;
  border-right: 2px solid #fff;
  border-bottom: 2px solid #fff;
}
.report thead th:last-child {
  border-right: none;
}
.report .inbox th {
  border-bottom: 2px solid #fff;
}
.report tbody + tbody .inbox th {
  height: 30px;
  border-top: 6px solid #fff;
}
.report .inbox span {
  margin-right: 8px;
  color: #e0d8ea;
}
.report .alt td {
  background: #f3f4f9;
}
.report tbody tr:last-child td {
  height: 26px;
  border-bottom: 2px solid #6c7785;
}

/* margin guides drawn over the sheet */
.guide {
  position: absolute;
}
.guide.left,
.guide.right {
  top: 3px;
  bottom: 0;
  width: 1px;
  background: repeating-linear-gradient(#a0a0a0 0 3px, transparent 3px 4px);
}
.guide.left { left: 99px; }
.guide.right { right: 98px; }
.guide.top {
  top: 99px;
  left: 3px;
  right: 4px;
  height: 1px;
  background: repeating-linear-gradient(90deg, #a0a0a0 0 3px, transparent 3px 4px);
}
```
